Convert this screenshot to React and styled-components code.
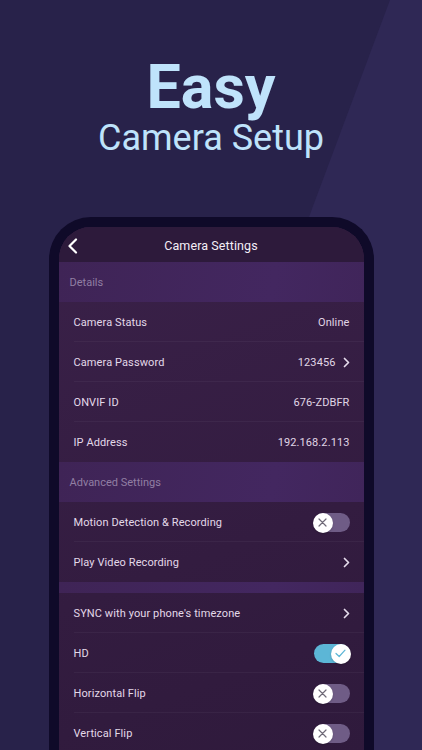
import React from "react";
import styled, { createGlobalStyle } from "styled-components";

const Global = createGlobalStyle`
  html, body { margin: 0; padding: 0; background: #29234a; }
  * { box-sizing: border-box; }
`;

const Page = styled.div`
  position: relative;
  width: 422px;
  height: 750px;
  overflow: hidden;
  background: #28224a;
  display: flex;
  flex-direction: column;
  align-items: center;
  padding-top: 57px;
  &::before {
    content: "";
    position: absolute;
    inset: 0;
    background: #2f2855;
    clip-path: polygon(390px 0, 100% 0, 100% 100%, 110px 100%);
  }
`;

const Hero = styled.h1`
  position: relative;
  margin: 0;
  display: flex;
  flex-direction: column;
  align-items: center;
  color: #bfe3fb;
  font-family: Roboto, "Liberation Sans", sans-serif;
  font-weight: 400;
`;

const Big = styled.span`
  font-size: 61px;
  line-height: 60px;
  font-weight: 700;
`;

const Sub = styled.span`
  margin-top: 3px;
  font-size: 36px;
  line-height: 36px;
  font-weight: 400;
`;

const Phone = styled.div`
  position: relative;
  margin-top: 61px;
  width: 325px;
  flex: 1 0 auto;
  border: 10px solid #0f0a29;
  border-bottom: none;
  border-radius: 42px 42px 0 0;
  background: #0f0a29;
`;

const Screen = styled.div`
  height: 100%;
  border-radius: 32px 32px 0 0;
  overflow: hidden;
  background: linear-gradient(160deg, #3a2149 0%, #331c40 60%, #2f1a3c 100%);
  font-family: Roboto, "Liberation Sans", sans-serif;
`;

const NavBar = styled.div`
  height: 35px;
  display: grid;
  grid-template-columns: 40px 1fr 40px;
  align-items: center;
  background: #2d1a3b;
  color: #f4eef7;
  padding-top: 2px;
`;

const Back = styled.div`
  display: flex;
  align-items: center;
  padding-left: 8px;
`;

const NavTitle = styled.div`
  text-align: center;
  font-size: 12.5px;
  letter-spacing: 0.1px;
`;

const SectionHead = styled.div`
  height: 40px;
  display: flex;
  align-items: center;
  padding-left: 11px;
  background: linear-gradient(100deg, #3f2456 0%, #432760 70%, #40255a 100%);
  color: #917fa3;
  font-size: 11px;
`;

const Spacer = styled.div`
  height: 11px;
  background: linear-gradient(100deg, #3f2456 0%, #432760 70%, #40255a 100%);
`;

const Row = styled.div`
  position: relative;
  height: 40px;
  display: flex;
  align-items: center;
  justify-content: space-between;
  padding: 1px 14px 0 15px;
  color: #e3d9e9;
  font-size: 11px;
  letter-spacing: 0.1px;
  &:not(:last-child)::after {
    content: "";
    position: absolute;
    left: 15px;
    right: 0;
    bottom: 0;
    height: 1px;
    background: rgba(255, 255, 255, 0.045);
  }
`;

const Value = styled.div`
  display: flex;
  align-items: center;
  gap: 7px;
  color: #e0d6e6;
`;

const Track = styled.div`
  position: relative;
  width: 36px;
  height: 19px;
  border-radius: 10px;
  background: ${(p) => (p.$on ? "#5cb6d6" : "#6f5c86")};
`;

const Knob = styled.div`
  position: absolute;
  top: -0.5px;
  ${(p) => (p.$on ? "right: -1px;" : "left: -1px;")}
  width: 20px;
  height: 20px;
  border-radius: 50%;
  background: #ffffff;
  display: flex;
  align-items: center;
  justify-content: center;
  box-shadow: 0 1px 2px rgba(0, 0, 0, 0.2);
`;

const Chevron = ({ color = "#e6dcec" }) => (
  <svg width="7" height="11" viewBox="0 0 7 11" fill="none">
    <path d="M1.5 1.5l4 4-4 4" stroke={color} strokeWidth="1.7" strokeLinecap="round" strokeLinejoin="round" />
  </svg>
);

const Toggle = ({ on }) => (
  <Track $on={on}>
    <Knob $on={on}>
      {on ? (
        <svg width="11" height="9" viewBox="0 0 11 9" fill="none">
          <path d="M1 4.5l3.2 3L10 1.2" stroke="#5cb6d6" strokeWidth="1.2" strokeLinecap="round" strokeLinejoin="round" />
        </svg>
      ) : (
        <svg width="9" height="9" viewBox="0 0 9 9" fill="none">
          <path d="M1 1l7 7M8 1L1 8" stroke="#6f6a78" strokeWidth="1.2" strokeLinecap="round" />
        </svg>
      )}
    </Knob>
  </Track>
);

export default function App() {
  return (
    <Page>
      <Global />
      <Hero>
        <Big>Easy</Big>
        <Sub>Camera Setup</Sub>
      </Hero>
      <Phone>
        <Screen>
          <NavBar>
            <Back>
              <svg width="11" height="16" viewBox="0 0 11 16" fill="none">
                <path d="M9 1.5L2.5 8 9 14.5" stroke="#ffffff" strokeWidth="2.2" strokeLinecap="round" strokeLinejoin="round" />
              </svg>
            </Back>
            <NavTitle>Camera Settings</NavTitle>
            <div />
          </NavBar>
          <SectionHead>Details</SectionHead>
          <div>
            <Row>Camera Status<Value>Online</Value></Row>
            <Row>Camera Password<Value>123456<Chevron /></Value></Row>
            <Row>ONVIF ID<Value>676-ZDBFR</Value></Row>
            <Row>IP Address<Value>192.168.2.113</Value></Row>
          </div>
          <SectionHead>Advanced Settings</SectionHead>
          <div>
            <Row>Motion Detection &amp; Recording<Toggle on={false} /></Row>
            <Row>Play Video Recording<Value><Chevron /></Value></Row>
          </div>
          <Spacer />
          <div>
            <Row>SYNC with your phone's timezone<Value><Chevron /></Value></Row>
            <Row>HD<Toggle on={true} /></Row>
            <Row>Horizontal Flip<Toggle on={false} /></Row>
            <Row>Vertical Flip<Toggle on={false} /></Row>
          </div>
        </Screen>
      </Phone>
    </Page>
  );
}
